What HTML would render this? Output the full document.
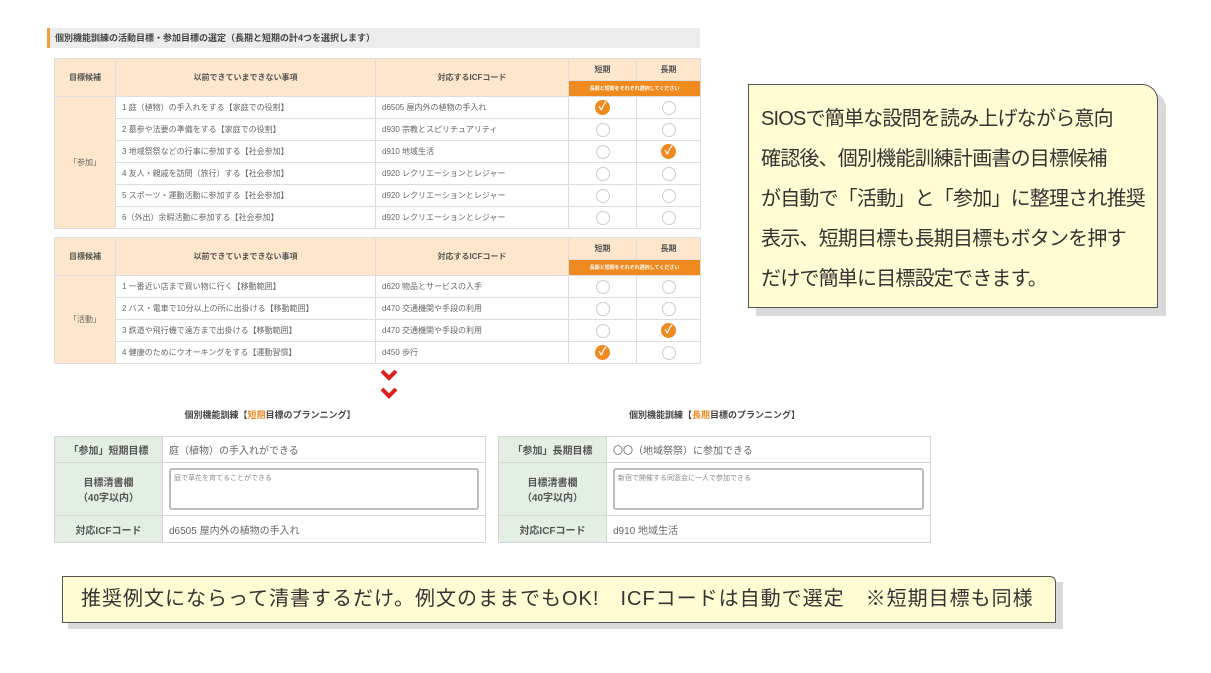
<!DOCTYPE html><html><head><meta charset="utf-8"><style>
*{margin:0;padding:0;box-sizing:border-box}
body{width:1211px;height:673px;background:#fff;position:relative;overflow:hidden;font-family:"Liberation Sans","Noto Sans CJK JP",sans-serif;color:#555}
.a{position:absolute}
table{border-collapse:collapse;position:absolute;font-size:8px;color:#666;table-layout:fixed}
td{border:1px solid #ddd;padding:0 6px;height:22px}
.h td{background:#fde6cc;text-align:center;color:#555;font-weight:bold}
.c{text-align:center}
.rad{display:inline-block;width:14px;height:14px;border:1px solid #ccc;border-radius:50%;vertical-align:middle}
.chk{display:inline-block;width:15px;height:15px;background:#ef8a1f;border-radius:50%;vertical-align:middle;color:#fff;font-size:11px;line-height:15px;text-align:center;font-weight:bold}
.lab{background:#e3efe3;text-align:center;font-weight:bold;color:#555}
.bt td{font-size:10px;border-color:#d5d5d5}
</style></head><body>
<div class="a" style="left:47px;top:28px;width:653px;height:20px;background:#ececec;border-left:3px solid #f0a030;font-size:9px;font-weight:bold;line-height:20px;padding-left:5px;color:#444">個別機能訓練の活動目標・参加目標の選定（長期と短期の計4つを選択します）</div>

<table style="left:54px;top:58px;width:646px">
<colgroup><col style="width:61px"><col style="width:260px"><col style="width:193px"><col style="width:68px"><col style="width:64px"></colgroup>
<tr class="h"><td rowspan="2" style="height:35px">目標候補</td><td rowspan="2">以前できていまできない事項</td><td rowspan="2">対応するICFコード</td><td style="height:18px">短期</td><td>長期</td></tr>
<tr class="h"><td colspan="2" style="background:#ef8a1f;color:#fff;font-size:5px;height:16px">長期と短期をそれぞれ選択してください</td></tr>
<tr><td rowspan="6" class="c" style="background:#fde6cc">「参加」</td><td>1 庭（植物）の手入れをする【家庭での役割】</td><td>d6505 屋内外の植物の手入れ</td><td class="c"><span class="chk">✓</span></td><td class="c"><span class="rad"></span></td></tr>
<tr><td>2 墓参や法要の準備をする【家庭での役割】</td><td>d930 宗教とスピリチュアリティ</td><td class="c"><span class="rad"></span></td><td class="c"><span class="rad"></span></td></tr>
<tr><td>3 地域祭祭などの行事に参加する【社会参加】</td><td>d910 地域生活</td><td class="c"><span class="rad"></span></td><td class="c"><span class="chk">✓</span></td></tr>
<tr><td>4 友人・親戚を訪問（旅行）する【社会参加】</td><td>d920 レクリエーションとレジャー</td><td class="c"><span class="rad"></span></td><td class="c"><span class="rad"></span></td></tr>
<tr><td>5 スポーツ・運動活動に参加する【社会参加】</td><td>d920 レクリエーションとレジャー</td><td class="c"><span class="rad"></span></td><td class="c"><span class="rad"></span></td></tr>
<tr><td>6（外出）余暇活動に参加する【社会参加】</td><td>d920 レクリエーションとレジャー</td><td class="c"><span class="rad"></span></td><td class="c"><span class="rad"></span></td></tr>
</table>

<table style="left:54px;top:237px;width:646px">
<colgroup><col style="width:61px"><col style="width:260px"><col style="width:193px"><col style="width:68px"><col style="width:64px"></colgroup>
<tr class="h"><td rowspan="2" style="height:35px">目標候補</td><td rowspan="2">以前できていまできない事項</td><td rowspan="2">対応するICFコード</td><td style="height:18px">短期</td><td>長期</td></tr>
<tr class="h"><td colspan="2" style="background:#ef8a1f;color:#fff;font-size:5px;height:16px">長期と短期をそれぞれ選択してください</td></tr>
<tr><td rowspan="4" class="c" style="background:#fde6cc">「活動」</td><td>1 一番近い店まで買い物に行く【移動範囲】</td><td>d620 物品とサービスの入手</td><td class="c"><span class="rad"></span></td><td class="c"><span class="rad"></span></td></tr>
<tr><td>2 バス・電車で10分以上の所に出掛ける【移動範囲】</td><td>d470 交通機関や手段の利用</td><td class="c"><span class="rad"></span></td><td class="c"><span class="rad"></span></td></tr>
<tr><td>3 鉄道や飛行機で遠方まで出掛ける【移動範囲】</td><td>d470 交通機関や手段の利用</td><td class="c"><span class="rad"></span></td><td class="c"><span class="chk">✓</span></td></tr>
<tr><td>4 健康のためにウオーキングをする【運動習慣】</td><td>d450 歩行</td><td class="c"><span class="chk">✓</span></td><td class="c"><span class="rad"></span></td></tr>
</table>

<svg class="a" style="left:378px;top:368px" width="22" height="36"><path d="M4 3l7 7 7-7" stroke="#e0201a" stroke-width="4" fill="none"/><path d="M4 21l7 7 7-7" stroke="#e0201a" stroke-width="4" fill="none"/></svg>

<div class="a" style="left:54px;top:408px;width:432px;text-align:center;font-size:9px;font-weight:bold;color:#444">個別機能訓練【<span style="color:#ef8a1f">短期</span>目標のプランニング】</div>
<div class="a" style="left:498px;top:408px;width:433px;text-align:center;font-size:9px;font-weight:bold;color:#444">個別機能訓練【<span style="color:#ef8a1f">長期</span>目標のプランニング】</div>

<table class="bt" style="left:54px;top:436px;width:432px">
<colgroup><col style="width:108px"><col></colgroup>
<tr><td class="lab" style="height:26px">「参加」短期目標</td><td>庭（植物）の手入れができる</td></tr>
<tr><td class="lab" style="height:53px">目標清書欄<br>（40字以内）</td><td><div style="border:2px solid #bbb;border-radius:3px;height:42px;font-size:7px;padding:3px;color:#888">庭で草花を育てることができる</div></td></tr>
<tr><td class="lab" style="height:27px">対応ICFコード</td><td>d6505 屋内外の植物の手入れ</td></tr>
</table>
<table class="bt" style="left:498px;top:436px;width:433px">
<colgroup><col style="width:108px"><col></colgroup>
<tr><td class="lab" style="height:26px">「参加」長期目標</td><td>〇〇（地域祭祭）に参加できる</td></tr>
<tr><td class="lab" style="height:53px">目標清書欄<br>（40字以内）</td><td><div style="border:2px solid #bbb;border-radius:3px;height:42px;font-size:7px;padding:3px;color:#888">新宿で開催する同窓会に一人で参加できる</div></td></tr>
<tr><td class="lab" style="height:27px">対応ICFコード</td><td>d910 地域生活</td></tr>
</table>

<div class="a" style="left:756px;top:92px;width:410px;height:224px;background:#d9d9d9;border-top-right-radius:16px"></div>
<div class="a" style="left:748px;top:84px;width:410px;height:224px;background:#fffbd2;border:1.5px solid #555;border-top-right-radius:16px;padding:14px 0 0 12px;font-size:20px;line-height:40px;color:#333;letter-spacing:-0.8px;white-space:nowrap">SIOSで簡単な設問を読み上げながら意向<br>確認後、個別機能訓練計画書の目標候補<br>が自動で「活動」と「参加」に整理され推奨<br>表示、短期目標も長期目標もボタンを押す<br>だけで簡単に目標設定できます。</div>

<div class="a" style="left:68px;top:582px;width:995px;height:47px;background:#d9d9d9"></div>
<div class="a" style="left:62px;top:576px;width:994px;height:47px;background:#fffbd2;border:1.5px solid #555;border-top-right-radius:6px;font-size:20px;letter-spacing:1px;line-height:44px;padding-left:18px;color:#333;white-space:nowrap">推奨例文にならって清書するだけ。例文のままでもOK!　ICFコードは自動で選定　※短期目標も同様</div>
</body></html>
